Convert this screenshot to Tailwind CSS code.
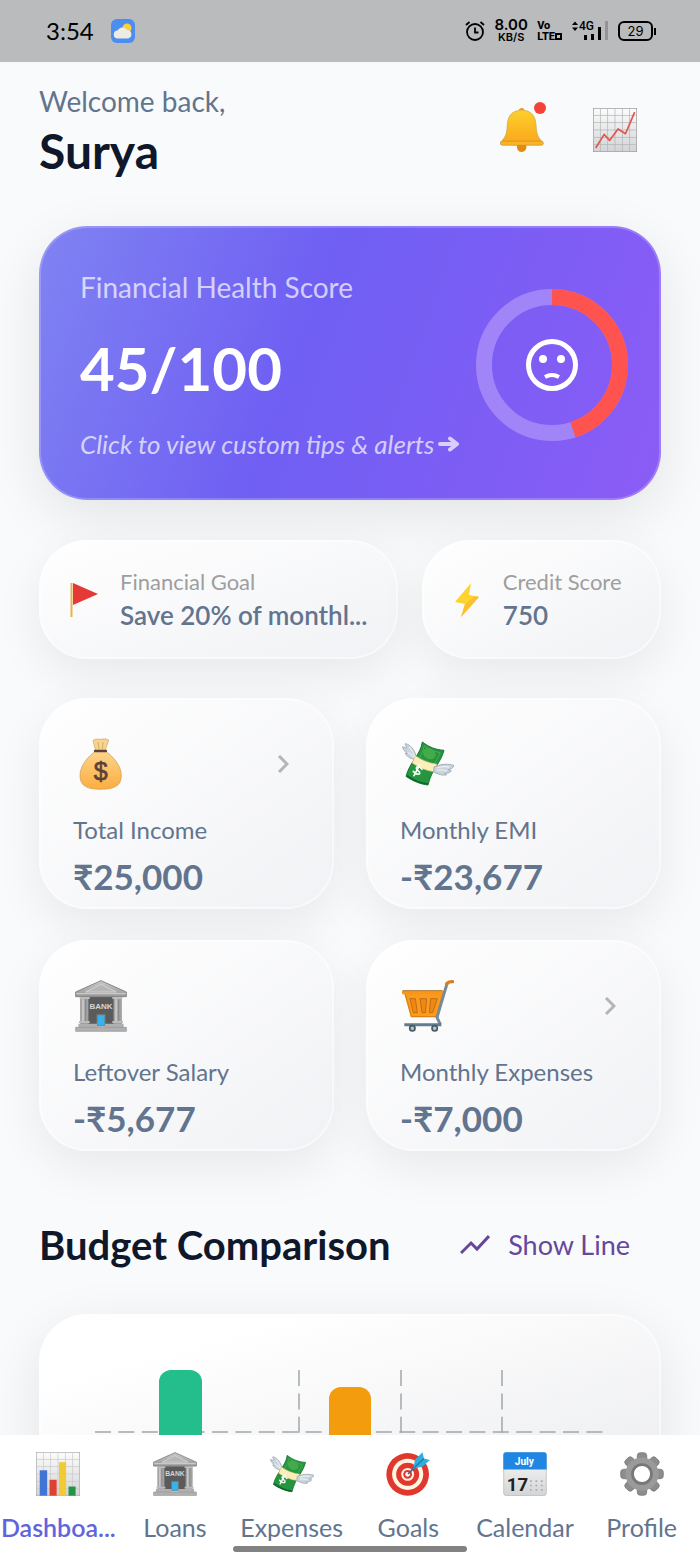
<!DOCTYPE html>
<html lang="en">

<head>
  <meta charset="UTF-8">
  <meta name="viewport" content="width=device-width, initial-scale=1.0">
  <title>Finance Dashboard</title>
  <script src="https://cdn.jsdelivr.net/npm/@tailwindcss/browser@4"></script>
</head>

<body class="h-screen flex flex-col overflow-hidden bg-[#f9fafc] font-['Lato','Noto_Sans',sans-serif] text-slate-500">

  <!-- Shared icons -->
  <svg class="absolute size-0" aria-hidden="true">
    <defs>
      <linearGradient id="stone" x1="0" y1="0" x2="0" y2="1">
        <stop offset="0" stop-color="#c9c9c9" />
        <stop offset="1" stop-color="#989898" />
      </linearGradient>
      <linearGradient id="paper" x1="0" y1="0" x2="0" y2="1">
        <stop offset="0" stop-color="#fcfcfc" />
        <stop offset="1" stop-color="#d3d4d6" />
      </linearGradient>
      <linearGradient id="gold" x1="0" y1="0" x2="0" y2="1">
        <stop offset="0" stop-color="#fdd02c" />
        <stop offset="1" stop-color="#fba91d" />
      </linearGradient>
      <linearGradient id="sack" x1="0" y1="0" x2="0" y2="1">
        <stop offset="0" stop-color="#fbd58c" />
        <stop offset="1" stop-color="#fbae3f" />
      </linearGradient>
    </defs>
    <symbol id="bank" viewBox="0 0 156 156">
      <rect x="38" y="50" width="80" height="84" fill="#5b5b5b" />
      <path d="M78 2 154 36V50H2V36Z" fill="url(#stone)" stroke="#868686" stroke-width="3" stroke-linejoin="round" />
      <path d="M78 13 124 36H32Z" fill="#b6b6b6" stroke="#d2d2d2" stroke-width="3" />
      <path d="M4 41H152" stroke="#c9c9c9" stroke-width="4" />
      <path d="M17 52H40V132H17ZM116 52H139V132H116Z" fill="#a9a9a9" stroke="#7e7e7e" stroke-width="2" />
      <path d="M24 58V126M123 58V126" stroke="#cacaca" stroke-width="5" />
      <path d="M32 58V126M131 58V126" stroke="#8b8b8b" stroke-width="4" />
      <path d="M14 54H44M112 54H142M12 126H44M112 126H144" stroke="#bdbdbd" stroke-width="6" />
      <rect x="66" y="104" width="24" height="34" fill="#35b3ee" stroke="#777" stroke-width="3" />
      <path d="M10 131H66V143H10ZM90 131H146V143H90Z" fill="#b0b0b0" />
      <path d="M2 142H154V154H2Z" fill="#b0b0b0" stroke="#8e8e8e" stroke-width="2" />
      <text x="78" y="86" text-anchor="middle" font-family="Liberation Sans, sans-serif" font-size="24" font-weight="700" fill="#d4d4d4">BANK</text>
    </symbol>
    <symbol id="cash" viewBox="0 0 156 156">
      <path d="M37 64C24 62 11 52 10 45C15 47 16 46 18 45C9 42 2 34 2 26C9 30 12 30 15 28C11 24 9 20 10 17C28 20 42 43 43 61Z" fill="#cbd3db" stroke="#a4adb8" stroke-width="3" />
      <path d="M22 27C31 37 35 46 38 56M16 42C24 47 31 52 36 58" stroke="#e8edf2" stroke-width="4" fill="none" />
      <path d="M61 12C82 28 100 35 126 37C116 76 90 91 78 141C58 139 34 130 12 115C24 70 55 52 61 12Z" fill="#25953f" stroke="#167536" stroke-width="3" />
      <path d="M67 23C84 36 98 41 114 44C107 66 94 80 86 95L41 74C54 57 64 42 67 23Z" fill="none" stroke="#4fa955" stroke-width="3" />
      <ellipse cx="82" cy="47" rx="20" ry="16" fill="#43ab4a" transform="rotate(30 82 47)" />
      <path d="M15 113C35 128 54 136 77 138" stroke="#0d652d" stroke-width="5" fill="none" />
      <path d="M40 53C60 67 80 75 105 79L96 101C73 98 51 89 31 75Z" fill="#fbeebb" stroke="#e1c980" stroke-width="2" />
      <path d="M96 87C110 81 124 78 137 79C145 79 150 82 156 82C153 90 147 94 139 95C143 98 146 98 148 99C141 106 134 106 128 105C129 108 132 109 134 110C122 114 108 108 95 102Z" fill="#cbd3db" stroke="#a4adb8" stroke-width="3" />
      <path d="M106 90C120 84 132 85 142 87M106 97C116 93 128 97 134 99" stroke="#e8edf2" stroke-width="4" fill="none" />
      <path d="M60 94C52 83 43 85 43 91C44 101 56 98 53 107C49 111 40 107 34 100M53 81 36 113" stroke="#f4fff4" stroke-width="5" fill="none" stroke-linecap="round" />
    </symbol>
  </svg>

  <!-- Status bar -->
  <div class="shrink-0 h-[62px] bg-[#b9bbbc] text-black flex items-center justify-between pl-[46px] pr-[44px]">
    <div class="flex items-center gap-[17px]">
      <span class="text-[24px] leading-8">3:54</span>
      <svg class="size-6" viewBox="0 0 24 24" aria-hidden="true">
        <rect width="24" height="24" rx="6" fill="#4b8df0" />
        <circle cx="16" cy="9" r="4.500" fill="#fbd03c" />
        <path d="M7 19.500a4 4 0 0 1-.5-8A5.500 5.500 0 0 1 16 11a4.300 4.300 0 0 1 1 8.500Z" fill="#eeeae4" />
      </svg>
    </div>
    <div class="flex items-center gap-[9px]">
      <svg class="size-5" viewBox="0 0 20 20" fill="none" stroke="#000" stroke-width="1.800" aria-hidden="true">
        <circle cx="10" cy="11" r="8" />
        <path d="M10 6.500V11.500H13.500M1 4 4.500 1M19 4 15.500 1" />
      </svg>
      <div class="w-[34px] text-center font-['Inter',sans-serif] font-semibold">
        <p class="text-[15px] leading-[13px]">8.00</p>
        <p class="text-[11px] leading-[13px]">KB/S</p>
      </div>
      <div class="font-['Roboto',sans-serif] font-extrabold text-[11px] leading-[11px]">
        <p>Vo</p>
        <p class="flex items-center">LTE<span class="size-[7px] border-2 border-black"></span></p>
      </div>
      <div class="relative w-[38px] h-[22px]">
        <svg class="w-full h-full" viewBox="0 0 38 22" aria-hidden="true">
          <path d="M1 5 4 1.500 7 5ZM1 7.500 4 11 7 7.500Z" />
          <path d="M13 15h3v5h-3ZM20 14h3v6h-3ZM27 7h3v13h-3Z" />
          <path d="M34 1h3v19h-3Z" fill="#929496" />
        </svg>
        <span class="absolute left-2 -top-px font-['Roboto',sans-serif] text-[12px] leading-[14px] font-medium">4G</span>
      </div>
      <div class="flex items-center gap-px">
        <span class="w-[35px] h-5 border-2 border-black rounded-md text-[13px] leading-4 text-center font-['Inter',sans-serif]">29</span>
        <span class="w-0.5 h-[7px] bg-black"></span>
      </div>
    </div>
  </div>

  <main class="flex-1 min-h-0 overflow-hidden px-[39px]">

    <!-- Greeting -->
    <header class="flex justify-between pt-[22px] pb-[47px]">
      <div>
        <p class="text-[28px] leading-[34px]">Welcome back,</p>
        <h1 class="mt-1 text-[48px] leading-[57px] font-bold text-slate-900">Surya</h1>
      </div>
      <div class="flex h-[92px]">
        <button class="relative w-[93px] flex items-center justify-center" aria-label="Notifications">
          <svg class="size-11" viewBox="0 0 130 130">
            <circle cx="64" cy="8" r="8" fill="#e79d20" />
            <path d="M50 106H78Q80 130 64 130Q48 130 50 106Z" fill="#df8c10" />
            <path d="M64 6C30 8 22 28 21 56C20 80 13 88 4 99H124C115 88 108 80 107 56C106 28 98 8 64 6Z" fill="url(#gold)" stroke="#c9a34a" stroke-width="2" />
            <rect x="1" y="98" width="127" height="12" rx="6" fill="#fbb524" stroke="#c08f2d" stroke-width="2" />
          </svg>
          <span class="absolute right-[22px] top-[18px] size-3 rounded-full bg-[#f44336]"></span>
        </button>
        <button class="w-[93px] flex items-center justify-center" aria-label="Reports">
          <svg class="size-11" viewBox="0 0 130 130">
            <rect x="1" y="1" width="128" height="128" fill="url(#paper)" stroke="#999" stroke-width="2" />
            <path d="M22 1V129M43 1V129M65 1V129M87 1V129M108 1V129M1 22H129M1 43H129M1 65H129M1 87H129M1 108H129" stroke="#aeb0b2" stroke-width="2" />
            <path d="M8 118 33 78 49 96 74 62 96 76 123 12" fill="none" stroke="#e2564d" stroke-width="5" stroke-linejoin="round" />
          </svg>
        </button>
      </div>
    </header>

    <!-- Health score -->
    <button class="w-full flex items-center justify-between text-left rounded-[48px] border-2 border-white/20 bg-[linear-gradient(110deg,#8083f2_0%,#6f5ff3_42%,#8b5cf6_100%)] bg-origin-border shadow-[0_16px_56px_rgba(0,0,0,0.09)] pl-[39px] pr-[31px] pt-[42px] pb-[38px]">
      <span class="block">
        <span class="block text-[28px] leading-[34px] text-white/70">Financial Health Score</span>
        <span class="block mt-6 text-[60px] leading-[80px] font-bold text-white">45/100</span>
        <span class="flex items-center gap-1 mt-5 text-[26px] leading-8 italic text-white/70 whitespace-nowrap">Click to view custom tips &amp; alerts
          <svg class="w-[22px] h-4" viewBox="0 0 22 16" fill="none" stroke="currentColor" stroke-width="4" stroke-linecap="round" stroke-linejoin="round" aria-hidden="true">
            <path d="M2 8H18M12 2.500 19 8 12 13.500" />
          </svg>
        </span>
      </span>
      <svg class="shrink-0 size-[152px]" viewBox="0 0 152 152" fill="none" aria-hidden="true">
        <circle cx="76" cy="76" r="68" stroke="#a084f8" stroke-width="16" />
        <circle cx="76" cy="76" r="68" stroke="#ff5350" stroke-width="16" pathLength="100" stroke-dasharray="45 55" transform="rotate(-90 76 76)" />
        <circle cx="76" cy="76" r="23.500" stroke="#fff" stroke-width="5" />
        <circle cx="67" cy="70" r="4" fill="#fff" />
        <circle cx="85" cy="70" r="4" fill="#fff" />
        <path d="M69 88Q76 84 83 88" stroke="#fff" stroke-width="4" />
      </svg>
    </button>

    <!-- Goal and credit score -->
    <div class="mt-10 grid grid-cols-[3fr_2fr] gap-6">
      <section class="min-w-0 flex items-center gap-[18px] rounded-[48px] border-2 border-white/50 bg-linear-to-br from-white to-[#f1f2f5] bg-origin-border shadow-[0_16px_48px_rgba(0,0,0,0.07)] pl-[25px] pr-6 py-6">
        <svg class="shrink-0 size-9" viewBox="0 0 36 36" aria-hidden="true">
          <path d="M7 1 32 12 7 23Z" fill="#e53935" />
          <path d="M5.500 1V35" stroke="#e9b04d" stroke-width="2" />
        </svg>
        <div class="min-w-0">
          <p class="text-[22px] leading-8 text-[#9e9e9e]">Financial Goal</p>
          <p class="text-[26px] leading-[35px] font-semibold whitespace-nowrap">Save 20% of monthl...</p>
        </div>
      </section>
      <section class="min-w-0 flex items-center gap-[18px] rounded-[48px] border-2 border-white/50 bg-linear-to-br from-white to-[#f1f2f5] bg-origin-border shadow-[0_16px_48px_rgba(0,0,0,0.07)] pl-[25px] pr-6 py-6">
        <svg class="shrink-0 size-9" viewBox="0 0 36 36" aria-hidden="true">
          <path d="M22 1 6 20 16 22 12 35 30 15 20 13Z" fill="#fdd32f" />
          <path d="M16 22 12 35 30 15 26 14Z" fill="#fbc02d" />
        </svg>
        <div class="min-w-0">
          <p class="text-[22px] leading-8 text-[#9e9e9e] whitespace-nowrap">Credit Score</p>
          <p class="text-[26px] leading-[35px] font-semibold">750</p>
        </div>
      </section>
    </div>

    <!-- Summary cards -->
    <div class="mt-[39px] grid grid-cols-2 gap-x-8 gap-y-[31px]">
      <button class="block text-left rounded-[48px] border-2 border-white/50 bg-linear-to-br from-white to-[#f1f2f5] bg-origin-border shadow-[0_16px_48px_rgba(0,0,0,0.07)] px-8 pt-[38px] pb-[9px]">
        <span class="flex items-center justify-between pl-0.5 pr-[11px]">
          <svg class="size-[52px]" viewBox="0 0 156 156" aria-hidden="true">
            <path d="M54 7Q66 1 77 4Q90 0 101 6L90 38H62Z" fill="#f7d48f" stroke="#c9a25c" stroke-width="2" />
            <path d="M69 12 72 34M84 12 82 34" stroke="#d9ae62" stroke-width="3" />
            <path d="M61 40C38 56 14 84 15 115C16 146 40 154 77 154C114 154 138 146 139 115C140 84 115 56 92 40Z" fill="url(#sack)" stroke="#cf9a4c" stroke-width="2" />
            <path d="M60 39H93" stroke="#5b4138" stroke-width="7" stroke-linecap="round" />
            <text x="77" y="127" text-anchor="middle" font-family="Liberation Sans, sans-serif" font-size="75" font-weight="400" fill="#5b4138" stroke="#5b4138" stroke-width="2">$</text>
          </svg>
          <svg class="w-3 h-[18px]" viewBox="0 0 12 18" fill="none" stroke="#b4b5b7" stroke-width="3" aria-hidden="true">
            <path d="M2 1 10 9 2 17" />
          </svg>
        </span>
        <span class="block mt-6 text-[24px] leading-8">Total Income</span>
        <span class="block mt-2 text-[35px] leading-[44px] font-bold">₹25,000</span>
      </button>
      <section class="rounded-[48px] border-2 border-white/50 bg-linear-to-br from-white to-[#f1f2f5] bg-origin-border shadow-[0_16px_48px_rgba(0,0,0,0.07)] px-8 pt-[38px] pb-[9px]">
        <svg class="ml-0.5 size-[52px]" aria-hidden="true"><use href="#cash" /></svg>
        <p class="mt-6 text-[24px] leading-8">Monthly EMI</p>
        <p class="mt-2 text-[35px] leading-[44px] font-bold">-₹23,677</p>
      </section>
      <section class="rounded-[48px] border-2 border-white/50 bg-linear-to-br from-white to-[#f1f2f5] bg-origin-border shadow-[0_16px_48px_rgba(0,0,0,0.07)] px-8 pt-[38px] pb-[9px]">
        <svg class="ml-0.5 size-[52px]" aria-hidden="true"><use href="#bank" /></svg>
        <p class="mt-6 text-[24px] leading-8">Leftover Salary</p>
        <p class="mt-2 text-[35px] leading-[44px] font-bold">-₹5,677</p>
      </section>
      <button class="block text-left rounded-[48px] border-2 border-white/50 bg-linear-to-br from-white to-[#f1f2f5] bg-origin-border shadow-[0_16px_48px_rgba(0,0,0,0.07)] px-8 pt-[38px] pb-[9px]">
        <span class="flex items-center justify-between pl-0.5 pr-[11px]">
          <svg class="size-[52px]" viewBox="0 0 156 156" fill="none" aria-hidden="true">
            <path d="M8 38H124L104 110H28Z" fill="#fb9a1c" stroke="#e07f0c" stroke-width="4" stroke-linejoin="round" />
            <path d="M24 56H40L46 98H34ZM54 56H74L70 98H60ZM86 56H106L92 98H82Z" fill="#f08713" stroke="#bd6f16" stroke-width="3" />
            <path d="M5 37H122" stroke="#f8961c" stroke-width="12" stroke-linecap="round" />
            <path d="M2 32H120" stroke="#8d6b3c" stroke-width="2" />
            <path d="M136 8 105 112 115 134" stroke="#77899a" stroke-width="9" stroke-linejoin="round" />
            <path d="M134 12Q138 5 152 5" stroke="#d5811f" stroke-width="10" stroke-linecap="round" />
            <path d="M7 134H118" stroke="#607d8b" stroke-width="9" />
            <circle cx="31" cy="145" r="8" fill="#b8c3ca" stroke="#455a64" stroke-width="5" />
            <circle cx="98" cy="145" r="8" fill="#b8c3ca" stroke="#455a64" stroke-width="5" />
          </svg>
          <svg class="w-3 h-[18px]" viewBox="0 0 12 18" fill="none" stroke="#b4b5b7" stroke-width="3" aria-hidden="true">
            <path d="M2 1 10 9 2 17" />
          </svg>
        </span>
        <span class="block mt-6 text-[24px] leading-8">Monthly Expenses</span>
        <span class="block mt-2 text-[35px] leading-[44px] font-bold">-₹7,000</span>
      </button>
    </div>

    <!-- Budget chart -->
    <div class="mt-[66px] flex items-center justify-between">
      <h2 class="text-[40px] leading-[56px] font-bold text-slate-900 whitespace-nowrap">Budget Comparison</h2>
      <button class="flex items-center gap-[18px] pr-[31px] text-[27px] leading-[34px] text-[#65479b] whitespace-nowrap">
        <svg class="w-[30px] h-5" viewBox="0 0 30 20" fill="none" stroke="currentColor" stroke-width="3" aria-hidden="true">
          <path d="M1 18 11 8 17 14 29 1" />
        </svg>
        Show Line
      </button>
    </div>
    <section class="mt-[41px] rounded-[48px] border-2 border-white/50 bg-linear-165 from-white from-15% to-[#e6e7ea] to-90% bg-origin-border shadow-[0_16px_56px_rgba(0,0,0,0.09)]">
      <svg class="w-full" viewBox="0 0 618 300" fill="none" role="img" aria-label="Budget comparison bar chart">
        <path d="M258 54V300M360 54V300M461 54V300" stroke="#a3a6aa" stroke-width="1.500" stroke-dasharray="16 7.400" />
        <path d="M54 116H562" stroke="#a3a6aa" stroke-width="1.500" stroke-dasharray="16 7.400" />
        <path d="M118 300V66a12 12 0 0 1 12-12h19a12 12 0 0 1 12 12V300Z" fill="#23be8b" />
        <path d="M288 300V83a12 12 0 0 1 12-12h18a12 12 0 0 1 12 12V300Z" fill="#f29c0e" />
      </svg>
    </section>
  </main>

  <!-- Bottom navigation -->
  <nav class="relative shrink-0 grid grid-cols-6 bg-white pt-[17px] pb-[13px] text-[25px] leading-8 text-center whitespace-nowrap">
    <a href="#dashboard" class="flex flex-col items-center gap-[15px] font-semibold text-[#6164dc]">
      <svg class="size-11" viewBox="0 0 130 130" aria-hidden="true">
        <rect x="1" y="1" width="128" height="128" fill="url(#paper)" stroke="#aaa" stroke-width="2" />
        <path d="M22 1V129M43 1V129M65 1V129M87 1V129M108 1V129M1 22H129M1 43H129M1 65H129M1 87H129M1 108H129" stroke="#c6c8ca" stroke-width="2" />
        <path d="M11 54H33V129H11Z" fill="#4274d8" />
        <path d="M40 82H61V129H40Z" fill="#e0402f" />
        <path d="M68 30H89V129H68Z" fill="#f0cb35" />
        <path d="M96 102H117V129H96Z" fill="#259347" />
      </svg>
      <span>Dashboa...</span>
    </a>
    <a href="#loans" class="flex flex-col items-center gap-[15px]">
      <svg class="size-11" aria-hidden="true"><use href="#bank" /></svg>
      <span>Loans</span>
    </a>
    <a href="#expenses" class="flex flex-col items-center gap-[15px]">
      <svg class="size-11" aria-hidden="true"><use href="#cash" /></svg>
      <span>Expenses</span>
    </a>
    <a href="#goals" class="flex flex-col items-center gap-[15px]">
      <svg class="size-11" viewBox="0 0 130 130" aria-hidden="true">
        <circle cx="64" cy="66" r="63" fill="#e0382f" />
        <circle cx="64" cy="66" r="46" fill="#fff5e0" />
        <circle cx="64" cy="66" r="34" fill="#e0382f" />
        <circle cx="64" cy="66" r="19" fill="#fff5e0" />
        <circle cx="64" cy="66" r="13" fill="#e0382f" />
        <circle cx="64" cy="66" r="7" fill="#fff" />
        <path d="M65 65 92 38" stroke="#3f5f80" stroke-width="5" />
        <path d="M80 50 86 22 108 1 112 19 130 24 108 43Z" fill="#31aede" />
        <path d="M82 48 112 19" stroke="#147fae" stroke-width="4" />
      </svg>
      <span>Goals</span>
    </a>
    <a href="#calendar" class="flex flex-col items-center gap-[15px]">
      <svg class="size-11" viewBox="0 0 130 130" font-family="Roboto, sans-serif" font-weight="700" text-anchor="middle" aria-hidden="true">
        <rect x="2" y="1" width="126" height="128" rx="8" fill="url(#paper)" stroke="#b5b5b5" stroke-width="2" />
        <path d="M1 52V9a8 8 0 0 1 8-8h112a8 8 0 0 1 8 8V52Z" fill="#1f86e4" />
        <text x="63" y="37" font-size="30" fill="#fff">July</text>
        <text x="43" y="115" font-size="55" fill="#202124">17</text>
        <path d="M80 86H120M80 99H120M80 112H120" stroke="#a9abad" stroke-width="5" stroke-dasharray="5 11" />
      </svg>
      <span>Calendar</span>
    </a>
    <a href="#profile" class="flex flex-col items-center gap-[15px]">
      <svg class="size-11" viewBox="0 0 130 130" fill="none" aria-hidden="true">
        <g fill="#8d8d8d" stroke="#6d6d6d" stroke-width="2">
          <rect x="51" y="2" width="28" height="126" rx="9" />
          <rect x="51" y="2" width="28" height="126" rx="9" transform="rotate(45 65 65)" />
          <rect x="51" y="2" width="28" height="126" rx="9" transform="rotate(90 65 65)" />
          <rect x="51" y="2" width="28" height="126" rx="9" transform="rotate(135 65 65)" />
        </g>
        <circle cx="65" cy="65" r="49" fill="#9a9a9a" />
        <circle cx="65" cy="65" r="28" fill="#fff" stroke="#777" stroke-width="8" />
      </svg>
      <span>Profile</span>
    </a>
    <span class="absolute bottom-1 left-1/3 right-1/3 h-1.5 rounded-full bg-[#828282]"></span>
  </nav>
</body>

</html>
